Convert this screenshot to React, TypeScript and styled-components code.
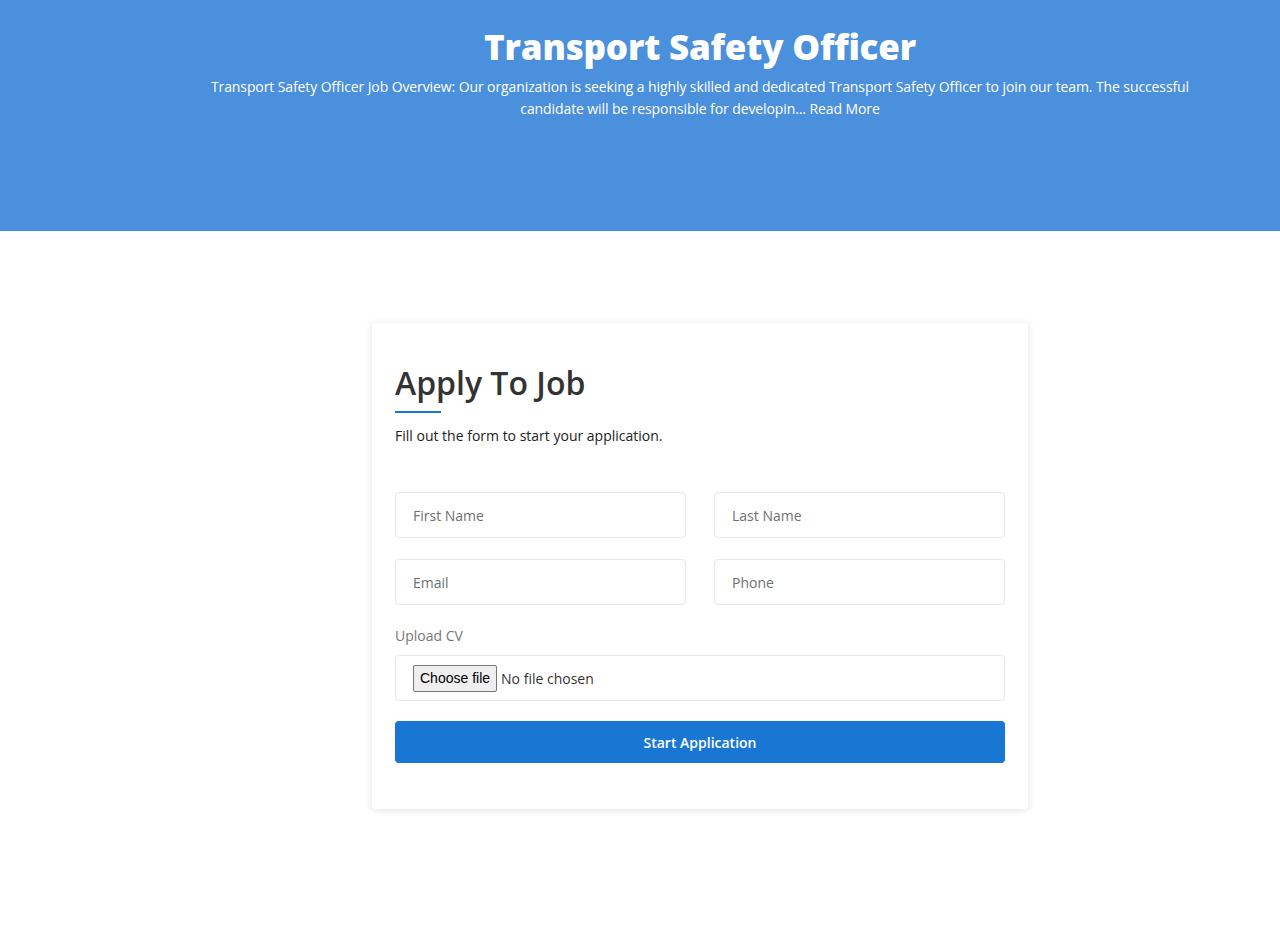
import styled, { createGlobalStyle } from 'styled-components'

const GlobalStyle = createGlobalStyle`
  * { box-sizing: border-box; }
  body {
    margin: 0;
    background: #fff;
    font-family: 'Open Sans', 'Liberation Sans', sans-serif;
    color: #222;
  }
`

// content is centred in the area right of a 120px offset
const Page = styled.div`
  padding-left: 120px;
`

const Hero = styled.header`
  background: #4a90dc;
  height: 231px;
  padding-top: 24px;
  margin-left: -120px;
  padding-left: 120px;
`

const HeroInner = styled.div`
  max-width: 1000px;
  margin: 0 auto;
  text-align: center;
  color: #fff;
`

const HeroTitle = styled.h1`
  margin: 0;
  font-size: 35px;
  line-height: 46px;
  font-weight: 800;
  letter-spacing: -0.2px;
`

const HeroText = styled.p`
  margin: 6px 0 0;
  font-size: 14px;
  line-height: 22px;
  font-weight: 500;
  letter-spacing: -0.1px;
`

const ReadMore = styled.a`
  color: #fff;
  text-decoration: none;
`

const Main = styled.main`
  display: flex;
  justify-content: center;
  padding: 92px 0 117px;
`

const Card = styled.section`
  width: 656px;
  background: #fff;
  border-radius: 4px;
  box-shadow: 0 1px 8px rgba(0, 0, 0, 0.12);
  padding: 38px 23px 46px;
`

const Title = styled.h2`
  margin: 0;
  font-size: 32px;
  line-height: 44px;
  font-weight: 600;
  color: #333;
`

const Rule = styled.div`
  width: 46px;
  height: 2px;
  background: #1976d2;
  margin-top: 6px;
`

const Subtitle = styled.p`
  margin: 13px 0 0;
  font-size: 14px;
  line-height: 20px;
  color: #222;
`

const Form = styled.form`
  margin-top: 46px;
  display: flex;
  flex-direction: column;
  gap: 21px;
`

const Row = styled.div`
  display: grid;
  grid-template-columns: 1fr 1fr;
  gap: 28px;
`

const Input = styled.input`
  height: 46px;
  width: 100%;
  border: 1px solid #e6e6e6;
  border-radius: 4px;
  padding: 0 17px;
  font-family: inherit;
  font-size: 14px;
  color: #333;
  outline: none;
  &::placeholder { color: #6f6f6f; }
`

const Field = styled.div`
  display: flex;
  flex-direction: column;
  gap: 9px;
  margin-bottom: -1px;
`

const Label = styled.span`
  font-size: 14px;
  line-height: 20px;
  color: #777;
`

const FileBox = styled.label`
  height: 46px;
  border: 1px solid #e6e6e6;
  border-radius: 4px;
  padding: 0 17px;
  display: flex;
  align-items: center;
  gap: 4px;
  cursor: pointer;
  input { display: none; }
`

const FileButton = styled.span`
  display: inline-flex;
  align-items: center;
  height: 27px;
  padding: 0 6px;
  border: 1px solid #767676;
  border-radius: 2px;
  background: #efefef;
  color: #000;
  font-family: 'Liberation Sans', Arial, sans-serif;
  font-size: 14px;
`

const FileName = styled.span`
  font-size: 14px;
  color: #333;
`

const Submit = styled.button`
  height: 42px;
  border: none;
  border-radius: 4px;
  background: #1976d2;
  color: #fff;
  font-family: inherit;
  font-size: 14px;
  font-weight: 600;
  cursor: pointer;
`

export default function App() {
  return (
    <Page>
      <GlobalStyle />
      <Hero>
        <HeroInner>
          <HeroTitle>Transport Safety Officer</HeroTitle>
          <HeroText>
            Transport Safety Officer Job Overview: Our organization is seeking a highly skilled and dedicated
            Transport Safety Officer to join our team. The successful candidate will be responsible for
            developin... <ReadMore href="#">Read More</ReadMore>
          </HeroText>
        </HeroInner>
      </Hero>
      <Main>
        <Card>
          <Title>Apply To Job</Title>
          <Rule />
          <Subtitle>Fill out the form to start your application.</Subtitle>
          <Form onSubmit={e => e.preventDefault()}>
            <Row>
              <Input placeholder="First Name" />
              <Input placeholder="Last Name" />
            </Row>
            <Row>
              <Input type="email" placeholder="Email" />
              <Input placeholder="Phone" />
            </Row>
            <Field>
              <Label>Upload CV</Label>
              <FileBox>
                <input type="file" />
                <FileButton>Choose file</FileButton>
                <FileName>No file chosen</FileName>
              </FileBox>
            </Field>
            <Submit type="submit">Start Application</Submit>
          </Form>
        </Card>
      </Main>
    </Page>
  )
}
